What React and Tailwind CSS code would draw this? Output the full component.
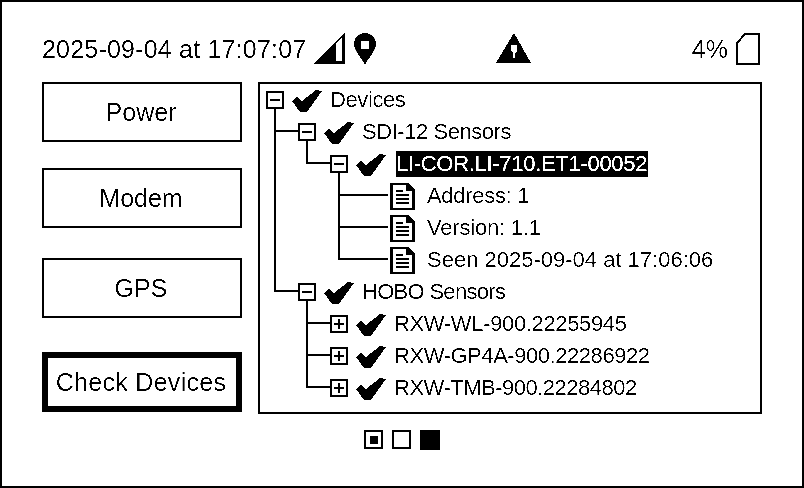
const font = { fontFamily: '"Liberation Sans", sans-serif' };

function Check() {
  return (
    <svg width="30" height="22" viewBox="0 0 30 22" shapeRendering="crispEdges" className="shrink-0 mt-0.5">
      <polygon points="0,11 5,7 10,11 24,0 30,1 15,22 8,22" fill="#000" />
    </svg>
  );
}

function ExpandBox({ open }) {
  return (
    <div className="relative w-[18px] h-[18px] shrink-0 border-2 border-black bg-white flex items-center justify-center">
      <div className="w-2.5 h-0.5 bg-black" />
      {!open && <div className="absolute w-0.5 h-2.5 bg-black" />}
    </div>
  );
}

function DocIcon() {
  return (
    <svg width="25" height="27" viewBox="0 0 25 27" shapeRendering="crispEdges" className="shrink-0">
      <path fillRule="evenodd" d="M0 0H18L25 7V27H0Z M3 2V25H22V8H16V2Z" fill="#000" />
      <path d="M6 7H13V9H6Z M6 11H19V13H6Z M6 15H19V17H6Z M6 19H19V21H6Z" fill="#000" />
    </svg>
  );
}

const rows = [
  { indent: 6, type: 'open', text: 'Devices', track: 'tracking-[-0.4px]' },
  { indent: 38, type: 'open', text: 'SDI-12 Sensors', track: 'tracking-[-0.45px]' },
  { indent: 70, type: 'open', text: 'LI-COR.LI-710.ET1-00052', selected: true, track: 'tracking-[-0.3px]' },
  { indent: 130, type: 'doc', text: 'Address: 1', track: 'tracking-[-0.3px]' },
  { indent: 130, type: 'doc', text: 'Version: 1.1', track: 'tracking-[-0.2px]' },
  { indent: 130, type: 'doc', text: 'Seen 2025-09-04 at 17:06:06', track: 'tracking-normal' },
  { indent: 38, type: 'open', text: 'HOBO Sensors', track: 'tracking-[-0.7px]' },
  { indent: 70, type: 'closed', text: 'RXW-WL-900.22255945', track: 'tracking-[-0.35px]' },
  { indent: 70, type: 'closed', text: 'RXW-GP4A-900.22286922', track: 'tracking-[-0.45px]' },
  { indent: 70, type: 'closed', text: 'RXW-TMB-900.22284802', track: 'tracking-[-0.5px]' },
];

function TreeRow({ row }) {
  return (
    <div className="h-8 flex items-center" style={{ paddingLeft: row.indent }}>
      {row.type === 'doc' ? (
        <>
          <DocIcon />
          <span className={`ml-3 text-[22px] leading-none whitespace-nowrap ${row.track}`}>{row.text}</span>
        </>
      ) : (
        <>
          <ExpandBox open={row.type === 'open'} />
          <div className="ml-2"><Check /></div>
          {row.selected ? (
            <span className={`ml-2.5 h-[26px] w-[252px] flex items-center bg-black text-white text-[22px] leading-none whitespace-nowrap ${row.track}`}>{row.text}</span>
          ) : (
            <span className={`ml-2 text-[22px] leading-none whitespace-nowrap ${row.track}`}>{row.text}</span>
          )}
        </>
      )}
    </div>
  );
}

function Tree() {
  return (
    <div className="relative w-[504px] h-[332px] border-2 border-black">
      {/* connector lines, coords relative to the panel's inner box */}
      <svg width="500" height="328" className="absolute left-0 top-0" shapeRendering="crispEdges">
        <path
          d="M15 24V207H38 M15 47H38 M47 56V79H70 M79 88V175H128 M79 111H128 M79 143H128 M47 216V303H70 M47 239H70 M47 271H70"
          fill="none"
          stroke="#000"
          strokeWidth="2"
        />
      </svg>
      <div className="relative">
        {rows.map((r) => <TreeRow key={r.text} row={r} />)}
      </div>
    </div>
  );
}

function Btn({ label, className, active }) {
  return (
    <button className={`w-[200px] h-[60px] pr-0.5 flex items-center justify-center text-[25px] leading-none bg-white border-black ${active ? 'border-[6px] tracking-[0.3px]' : 'border-2'} ${className}`}>
      {label}
    </button>
  );
}

export default function App() {
  return (
    <div className="w-[804px] h-[488px] bg-white text-black border-2 border-black flex flex-col brightness-[1.25] contrast-[5]" style={font}>
      <div className="h-[80px] pl-10 pr-[42px] pt-[30px] flex items-start">
        <div className="w-[452px] flex items-center h-[34px]">
          <span className="text-[25px] leading-none whitespace-nowrap tracking-[0.2px]">2025-09-04 at 17:07:07</span>
          <svg width="32" height="32" viewBox="0 0 32 32" shapeRendering="crispEdges" className="ml-[7px]">
            <path d="M32 0V31H0Z M29 4L23 10V28H29Z" fill="#000" fillRule="evenodd" />
          </svg>
          <svg width="24" height="32" viewBox="0 0 24 32" className="ml-2">
            <path fillRule="evenodd" d="M12 0C5 0 1 5 1 11C1 18 8 24 12 32C16 24 23 18 23 11C23 5 19 0 12 0ZM8 8H16V16H8Z" fill="#000" />
          </svg>
        </div>
        <svg width="36" height="30" viewBox="0 0 36 30" shapeRendering="crispEdges" className="mt-[1px] ml-[2px]">
          <path fillRule="evenodd" d="M18 0L35 30H0Z M15 12H21V18L19 20V25H17V20L15 18Z" fill="#000" />
        </svg>
        <div className="ml-auto flex items-center h-[34px]">
          <span className="text-[25px] leading-none">4%</span>
          <svg width="24" height="32" viewBox="0 0 24 32" shapeRendering="crispEdges" className="ml-2">
            <path d="M1 31V10L9 1H23V31Z" fill="none" stroke="#000" strokeWidth="2" />
          </svg>
        </div>
      </div>
      <div className="flex pl-10 gap-4">
        <div className="flex flex-col">
          <Btn label="Power" />
          <Btn label="Modem" className="mt-[26px]" />
          <Btn label="GPS" className="mt-[30px]" />
          <Btn label="Check Devices" active className="mt-[34px]" />
        </div>
        <Tree />
      </div>
      <div className="flex justify-center gap-[9px] mt-4">
        <div className="w-[19px] h-[19px] border-2 border-black flex items-center justify-center"><div className="w-2 h-2 bg-black" /></div>
        <div className="w-[19px] h-[19px] border-2 border-black" />
        <div className="w-5 h-5 bg-black" />
      </div>
    </div>
  );
}
